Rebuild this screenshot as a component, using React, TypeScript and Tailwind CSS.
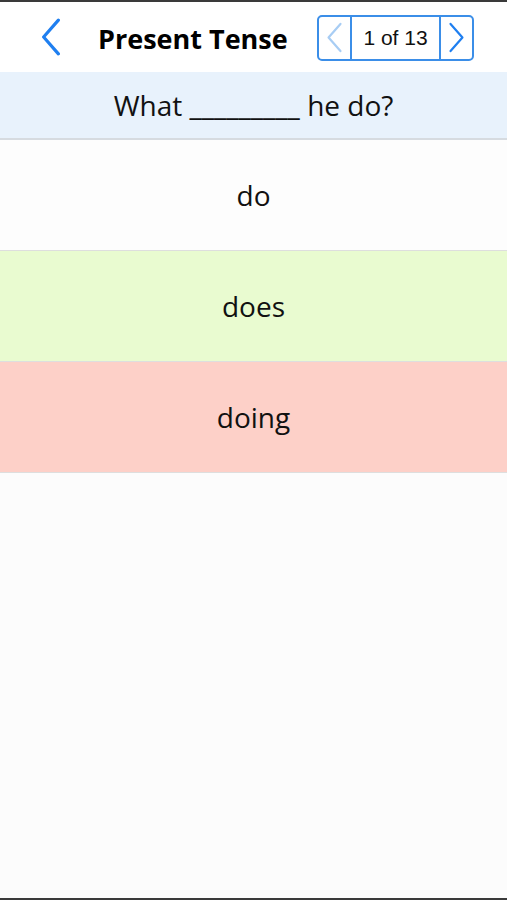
import React from 'react';

const font = { fontFamily: '"Open Sans", "Noto Sans", sans-serif' };

const options = [
  { label: 'do', bg: 'bg-[#fdfdfd]' },
  { label: 'does', bg: 'bg-[#e9fbd0]' },
  { label: 'doing', bg: 'bg-[#fdd0c8]' },
];

const Chevron: React.FC<{ dir: 'left' | 'right'; className?: string; w?: number }> = ({ dir, className, w = 3 }) => (
  <svg viewBox="0 0 20 36" className={className} fill="none" stroke="currentColor" strokeWidth={w} strokeLinecap="round" strokeLinejoin="round">
    {dir === 'left' ? <path d="M17 2 L3 18 L17 34" /> : <path d="M3 2 L17 18 L3 34" />}
  </svg>
);

export default function App() {
  return (
    <div className="w-[507px] h-[900px] bg-[#fcfcfc] flex flex-col border-t-2 border-b-2 border-[#3a3a3a]" style={font}>
      {/* header */}
      <div className="h-[70px] bg-white flex items-center shrink-0">
        <Chevron dir="left" className="ml-[40px] w-[22px] h-[38px] text-[#1f7ff0]" />
        <h1 className="ml-[36px] mt-[5px] text-[27px] font-bold text-black">Present Tense</h1>
        <div className="ml-auto mr-[33px] mt-[1px] flex h-[46px] w-[157px] rounded-[5px] border-2 border-[#3b8ee8] overflow-hidden">
          <div className="w-[33px] flex items-center justify-center border-r-2 border-[#3b8ee8]">
            <Chevron dir="left" w={2.6} className="w-[17px] h-[33px] text-[#a8cdf4]" />
          </div>
          <div
            className="flex-1 flex items-center justify-center text-[21px] text-[#111]"
            style={{ fontFamily: '"Liberation Sans", Arial, sans-serif' }}
          >
            1 of 13
          </div>
          <div className="w-[33px] flex items-center justify-center border-l-2 border-[#3b8ee8]">
            <Chevron dir="right" w={2.6} className="w-[17px] h-[33px] text-[#1f7ff0]" />
          </div>
        </div>
      </div>

      {/* question */}
      <div className="h-[68px] bg-[#e8f2fc] border-b-2 border-[#d6dbe0] flex items-center justify-center shrink-0">
        <p className="text-[28px] text-[#111]">What _________ he do?</p>
      </div>

      {/* answers */}
      {options.map((o) => (
        <div
          key={o.label}
          className={`h-[111px] shrink-0 flex items-center justify-center border-b border-[#dedede] ${o.bg}`}
        >
          <span className="text-[28px] text-[#111]">{o.label}</span>
        </div>
      ))}
    </div>
  );
}
